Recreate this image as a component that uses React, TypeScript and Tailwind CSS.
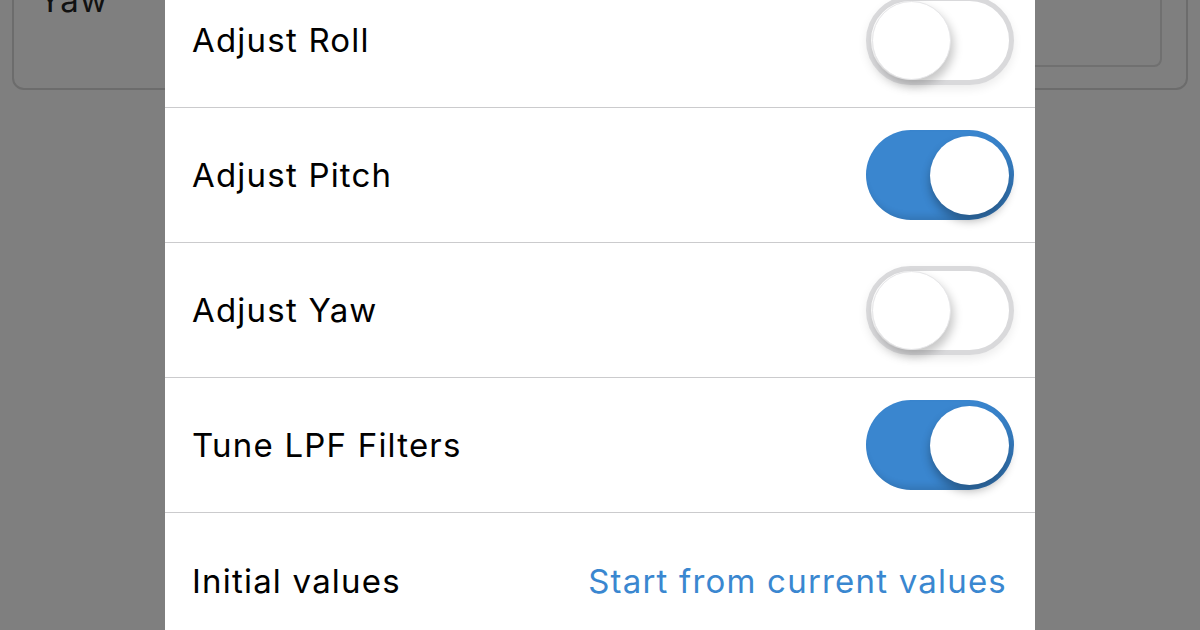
import React from "react";

function Toggle({ on }: { on: boolean }) {
  if (on) {
    return (
      <div className="relative w-[148px] h-[90px] rounded-full bg-[#3a86cf] shadow-[inset_-3px_-4px_6px_rgba(0,0,0,0.12)]">
        <div className="absolute right-[5px] top-[6px] w-[79px] h-[79px] rounded-full bg-white shadow-[0_6px_10px_rgba(0,0,0,0.3)]" />
      </div>
    );
  }
  return (
    <div className="relative w-[148px] h-[89px] rounded-full bg-white border-[5px] border-[#d9d9db] shadow-[0_4px_10px_rgba(0,0,0,0.08)]">
      <div className="absolute left-[1px] top-[0px] w-[79px] h-[79px] rounded-full bg-white shadow-[3px_6px_10px_rgba(0,0,0,0.22)] border border-[#e6e6e8]" />
    </div>
  );
}

const rows: { label: string; on: boolean }[] = [
  { label: "Adjust Roll", on: false },
  { label: "Adjust Pitch", on: true },
  { label: "Adjust Yaw", on: false },
  { label: "Tune LPF Filters", on: true },
];

export default function App() {
  const font = { fontFamily: "Inter, 'Open Sans', 'Liberation Sans', sans-serif" };
  return (
    <div className="relative w-[1200px] h-[630px] overflow-hidden bg-[#7f7f7f]" style={font}>
      <div className="mx-[12px] mt-[-40px] h-[130px] rounded-[12px] border-2 border-[#6c6c6c] flex">
        <div className="pl-[25px] pt-[22px] text-[33px] leading-none tracking-[1.2px] text-[#111]">Yaw</div>
        <div className="flex-1 ml-[60px] mr-[24px] mb-[21px] rounded-[8px] border-2 border-[#707070]" />
      </div>
      <div className="absolute left-[165px] top-0 w-[870px] h-[630px] bg-white">
        <div className="mt-[-27px] flex flex-col">
          {rows.map((r) => (
            <div
              key={r.label}
              className="h-[135px] flex items-center justify-between pl-[27px] pr-[21px] border-b border-[#cbcbcd]"
            >
              <span className="pt-[2px] text-[33px] tracking-[1.2px] text-black">{r.label}</span>
              <Toggle on={r.on} />
            </div>
          ))}
          <div className="h-[135px] flex items-center justify-between pl-[27px] pr-[28px]">
            <span className="pt-[2px] text-[33px] tracking-[1.2px] text-black">Initial values</span>
            <span className="pt-[2px] text-[33px] tracking-[1.2px] text-[#3a87d0]">Start from current values</span>
          </div>
        </div>
      </div>
    </div>
  );
}
